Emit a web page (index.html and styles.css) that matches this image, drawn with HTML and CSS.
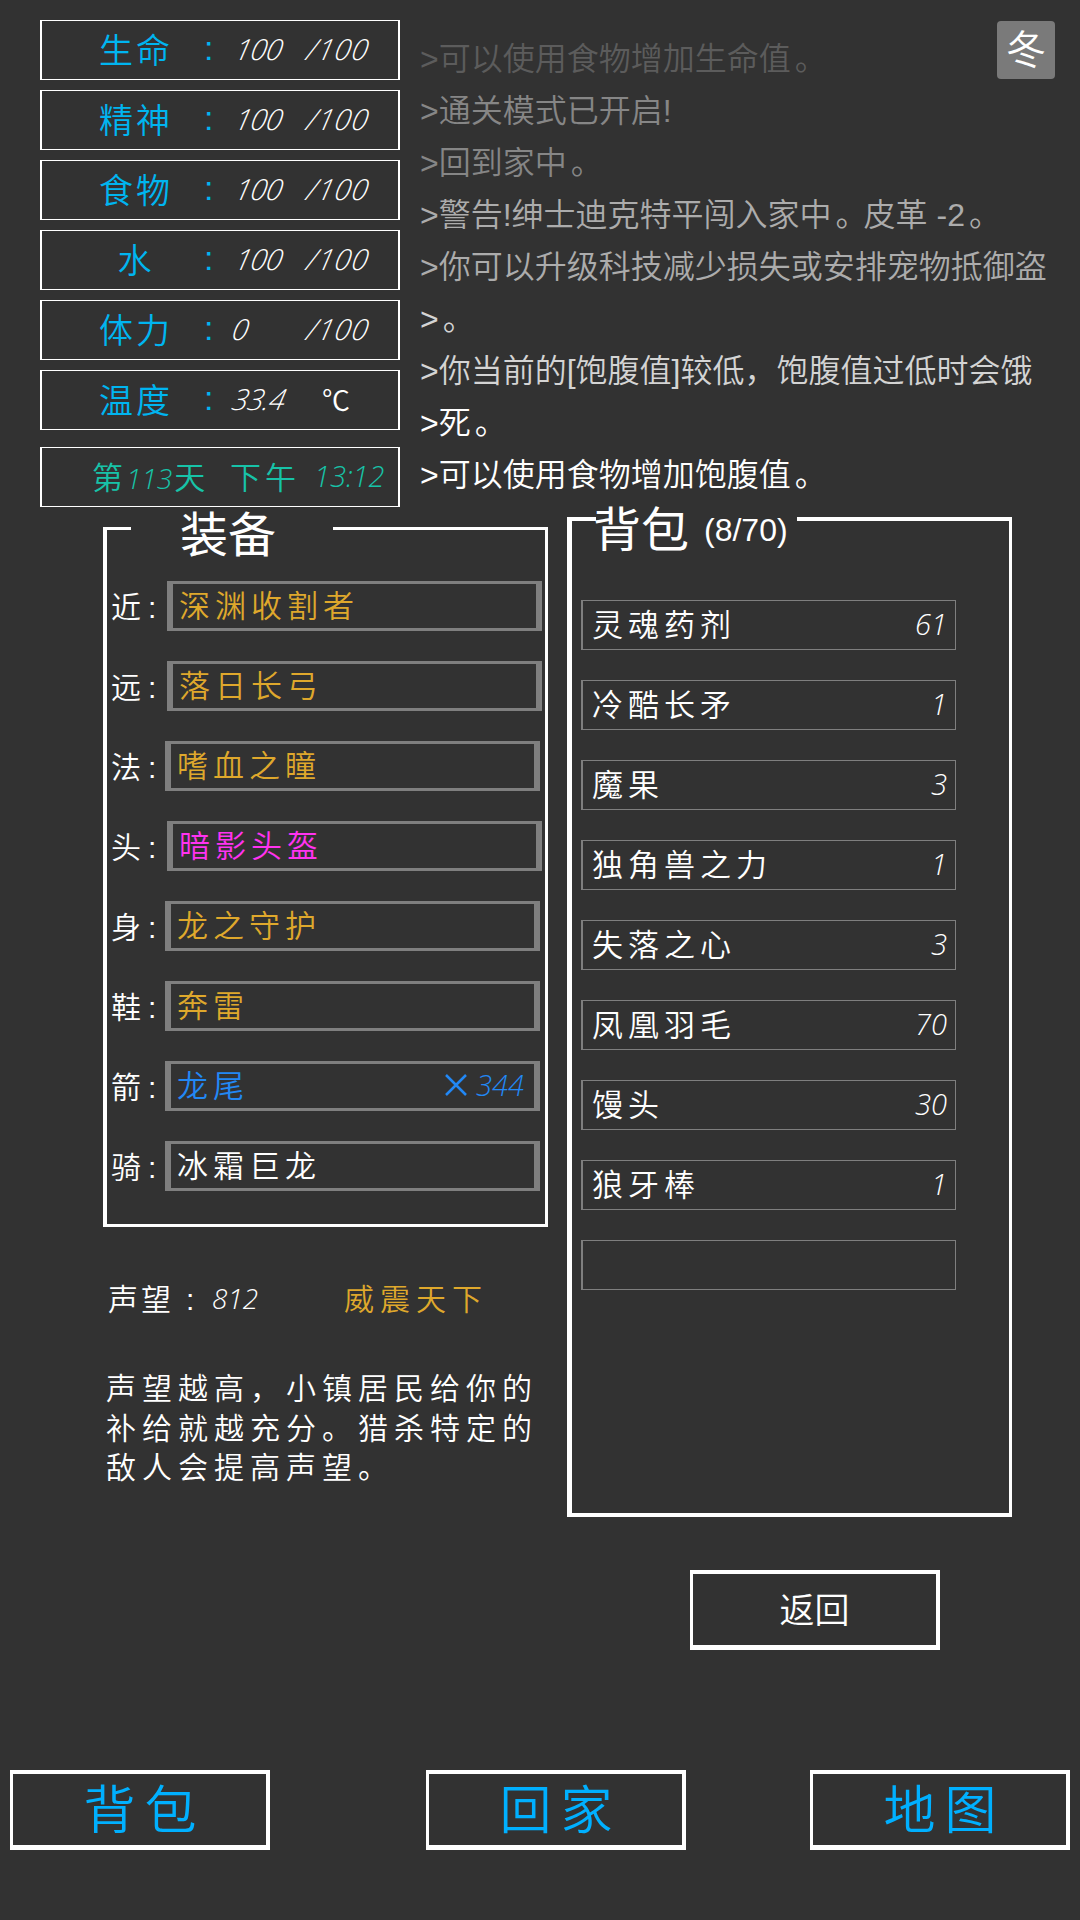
FILE: index.html
```
<!DOCTYPE html>
<html lang="zh-CN">
<head>
    <meta charset="UTF-8">
    <title>背包</title>
    <link rel="stylesheet" href="styles.css">
</head>
<body>
    <!-- 顶部：状态 + 日志 -->
    <header class="top">
        <div class="stats">
            <div class="stat"><span class="stat-name">生命</span><span class="colon">:</span><span class="num">100</span><span class="max">/100</span></div>
            <div class="stat"><span class="stat-name">精神</span><span class="colon">:</span><span class="num">100</span><span class="max">/100</span></div>
            <div class="stat"><span class="stat-name">食物</span><span class="colon">:</span><span class="num">100</span><span class="max">/100</span></div>
            <div class="stat"><span class="stat-name">水</span><span class="colon">:</span><span class="num">100</span><span class="max">/100</span></div>
            <div class="stat"><span class="stat-name">体力</span><span class="colon">:</span><span class="num num-left">0</span><span class="max">/100</span></div>
            <div class="stat"><span class="stat-name">温度</span><span class="colon">:</span><span class="num num-left">33.4</span><span class="unit">℃</span></div>
            <div class="stat date">
                <span class="date-day">第<i>113</i>天</span>
                <span class="date-part">下午</span>
                <i class="date-time">13:12</i>
            </div>
        </div>
        <div class="log">
            <p class="log-1">&gt;可以使用食物增加生命值<b>。</b></p>
            <p class="log-2">&gt;通关模式已开启!</p>
            <p class="log-2">&gt;回到家中<b>。</b></p>
            <p class="log-3">&gt;警告!绅士迪克特平闯入家中<b>。</b>皮革 -2<b>。</b></p>
            <p class="log-3">&gt;你可以升级科技减少损失或安排宠物抵御盗</p>
            <p class="log-4">&gt;<b>。</b></p>
            <p class="log-4">&gt;你当前的[饱腹值]较低，饱腹值过低时会饿</p>
            <p>&gt;死<b>。</b></p>
            <p>&gt;可以使用食物增加饱腹值<b>。</b></p>
        </div>
        <div class="season">冬</div>
    </header>

    <main class="main">
        <div class="left">
            <!-- 装备 -->
            <section class="panel equip">
                <h2 class="panel-title">装备</h2>
                <ul class="equip-list">
                    <li class="wide"><span class="slot">近:</span><div class="equip-box gold">深渊收割者</div></li>
                    <li class="wide"><span class="slot">远:</span><div class="equip-box gold">落日长弓</div></li>
                    <li><span class="slot">法:</span><div class="equip-box gold">嗜血之瞳</div></li>
                    <li class="wide"><span class="slot">头:</span><div class="equip-box pink">暗影头盔</div></li>
                    <li><span class="slot">身:</span><div class="equip-box gold">龙之守护</div></li>
                    <li><span class="slot">鞋:</span><div class="equip-box gold">奔雷</div></li>
                    <li>
                        <span class="slot">箭:</span>
                        <div class="equip-box blue">龙尾
                            <span class="ammo"><svg width="24" height="24" viewBox="0 0 24 24"><path d="M2 2L22 22M22 2L2 22" stroke="currentColor" stroke-width="2.5" fill="none"/></svg><i>344</i></span>
                        </div>
                    </li>
                    <li><span class="slot">骑:</span><div class="equip-box">冰霜巨龙</div></li>
                </ul>
            </section>

            <!-- 声望 -->
            <section class="fame">
                <div class="fame-head">
                    <span class="fame-name">声望</span><span class="fame-colon">:</span><i class="fame-value">812</i><span class="fame-title gold">威震天下</span>
                </div>
                <p class="fame-text">声望越高，小镇居民给你的<br>补给就越充分。猎杀特定的<br>敌人会提高声望。</p>
            </section>
        </div>

        <div class="right">
            <!-- 背包 -->
            <section class="panel bag">
                <h2 class="panel-title">背包<small>(8/70)</small></h2>
                <ul class="bag-list">
                    <li>灵魂药剂<i>61</i></li>
                    <li>冷酷长矛<i>1</i></li>
                    <li>魔果<i>3</i></li>
                    <li>独角兽之力<i>1</i></li>
                    <li>失落之心<i>3</i></li>
                    <li>凤凰羽毛<i>70</i></li>
                    <li>馒头<i>30</i></li>
                    <li>狼牙棒<i>1</i></li>
                    <li></li>
                </ul>
            </section>
            <button class="btn back">返回</button>
        </div>
    </main>

    <nav class="nav">
        <button class="btn">背包</button>
        <button class="btn">回家</button>
        <button class="btn">地图</button>
    </nav>
</body>
</html>
```
FILE: styles.css
```
* { box-sizing: border-box; }
body { margin: 0; width: 1080px; height: 1920px; background: #323232; color: #fff; font-family: "Liberation Sans", "Noto Sans CJK SC", sans-serif; font-weight: 350; overflow: hidden; display: flex; flex-direction: column; }
h2, p, ul { margin: 0; padding: 0; font-weight: 350; list-style: none; }
i { font-family: "Open Sans", sans-serif; font-weight: 300; font-style: italic; letter-spacing: 0; }

.gold { color: #dfa82c; }
.pink { color: #ff33f0; }
.blue { color: #2288f5; }

/* 顶部 */
.top { height: 507px; padding-top: 20px; padding-left: 40px; display: flex; flex: none; }
.stats { width: 360px; display: flex; flex-direction: column; gap: 10px; }
.stat { height: 60px; flex: none; border: 1px solid #fff; border-left-width: 2px; border-right-width: 2px; padding-bottom: 3px; display: flex; align-items: center; font-size: 34px; white-space: nowrap; }
.stat-name { width: 112px; padding-left: 20px; text-align: center; letter-spacing: 3px; margin-left: 28px; color: #00b5f0; }
.colon { width: 46px; padding-left: 22px; color: #00b5f0; }
.num, .max { font-family: "Open Sans", sans-serif; font-weight: 300; font-style: italic; font-size: 29px; letter-spacing: -0.5px; transform: skewX(-12deg); }
.num { width: 72px; padding-left: 8px; }
.num-left { padding-left: 5px; }
.max { padding-left: 8px; letter-spacing: 1px; }
.unit { font-size: 28px; padding-left: 22px; }
.date { margin-top: 7px; color: #17c3a8; font-size: 31px; }
.date-day { width: 138px; margin-left: 50px; }
.date-day i { letter-spacing: 0; padding: 0 2px 0 3px; font-size: 28px; }
.date-part { width: 84px; letter-spacing: 4px; }
.date-time { font-size: 29px; }

.log { width: 640px; padding-left: 20px; padding-top: 13px; font-size: 32px; line-height: 52px; white-space: nowrap; }
.log b { font-family: "Noto Sans CJK SC", sans-serif; font-weight: 350; line-height: 1; position: relative; left: 4px; }
.log-1 { color: #5c5c5c; }
.log-2 { color: #868686; }
.log-3 { color: #acacac; }
.log-4 { color: #d4d4d4; }
.season { position: absolute; left: 997px; top: 21px; width: 58px; height: 58px; border-radius: 4px; background: #7a7a7a; font-size: 40px; line-height: 58px; text-align: center; }

/* 面板 */
.main { height: 1263px; flex: none; padding-left: 103px; display: flex; }
.left { width: 464px; padding-top: 20px; }
.right { padding-top: 10px; }
.panel { width: 445px; border: 3px solid #fff; border-left-width: 4px; border-top: 0; position: relative; }
.panel::before, .panel::after { content: ""; position: absolute; top: 0; height: 3px; background: #fff; }
.panel::before { left: 0; width: 24px; }
.panel::after { right: 0; width: 212px; }
.panel-title { font-size: 48px; font-weight: 400; line-height: 54px; position: absolute; white-space: nowrap; }
.equip { height: 700px; }
.equip .panel-title { left: 73px; top: -18px; }
.equip-list { padding-top: 54px; }
.equip-list li { display: flex; height: 50px; margin-bottom: 30px; }
.slot { width: 58px; padding-left: 4px; font-size: 30px; line-height: 54px; letter-spacing: 7px; white-space: nowrap; }
.wide .slot { width: 60px; }
.equip-box { width: 375px; border: 3px solid #7f7f7f; border-left-width: 6px; border-right-width: 6px; padding-left: 6px; font-size: 31px; line-height: 46px; letter-spacing: 5px; display: flex; flex: none; }
.ammo { height: 42px; margin-left: auto; padding-right: 10px; display: flex; align-items: center; gap: 8px; }
.ammo i { font-size: 29px; }

.bag { height: 1000px; border-left-width: 5px; border-bottom-width: 4px; }
.bag::before, .bag::after { height: 4px; }
.bag .panel-title { left: 21px; top: -14px; }
.bag small { font-size: 32px; margin-left: 15px; vertical-align: 6px; }
.bag-list { padding: 83px 0 0 9px; }
.bag-list li { width: 375px; height: 50px; margin-bottom: 30px; border: 1px solid #7f7f7f; border-left-width: 2px; padding: 0 8px 0 9px; font-size: 31px; line-height: 50px; letter-spacing: 5px; display: flex; justify-content: space-between; }
.bag-list i { font-size: 29px; line-height: 46px; }

/* 声望 */
.fame { padding: 51px 0 0 5px; }
.fame-head { height: 44px; line-height: 44px; font-size: 30px; display: flex; }
.fame-name { width: 78px; letter-spacing: 3px; }
.fame-colon { width: 26px; }
.fame-value { width: 132px; font-size: 28px; line-height: 41px; }
.fame-title { letter-spacing: 6px; }
.fame-text { margin: 47px 0 0 -2px; font-size: 30px; line-height: 39.5px; letter-spacing: 6px; white-space: nowrap; }

/* 按钮 */
.btn { width: 260px; height: 80px; padding: 2px 0 0; border: solid #fff; border-width: 4px 4px 5px 3px; background: none; color: #00b0ff; font-family: inherit; font-weight: 350; font-size: 52px; letter-spacing: 9px; line-height: 60px; text-indent: 10px; }
.btn.back { width: 250px; margin: 53px 0 0 123px; padding-top: 2px; color: #fff; font-size: 35px; letter-spacing: 0; text-indent: 0; display: block; }
.nav { padding: 0 10px; display: grid; grid-template-columns: 416px 384px 260px; }
```
